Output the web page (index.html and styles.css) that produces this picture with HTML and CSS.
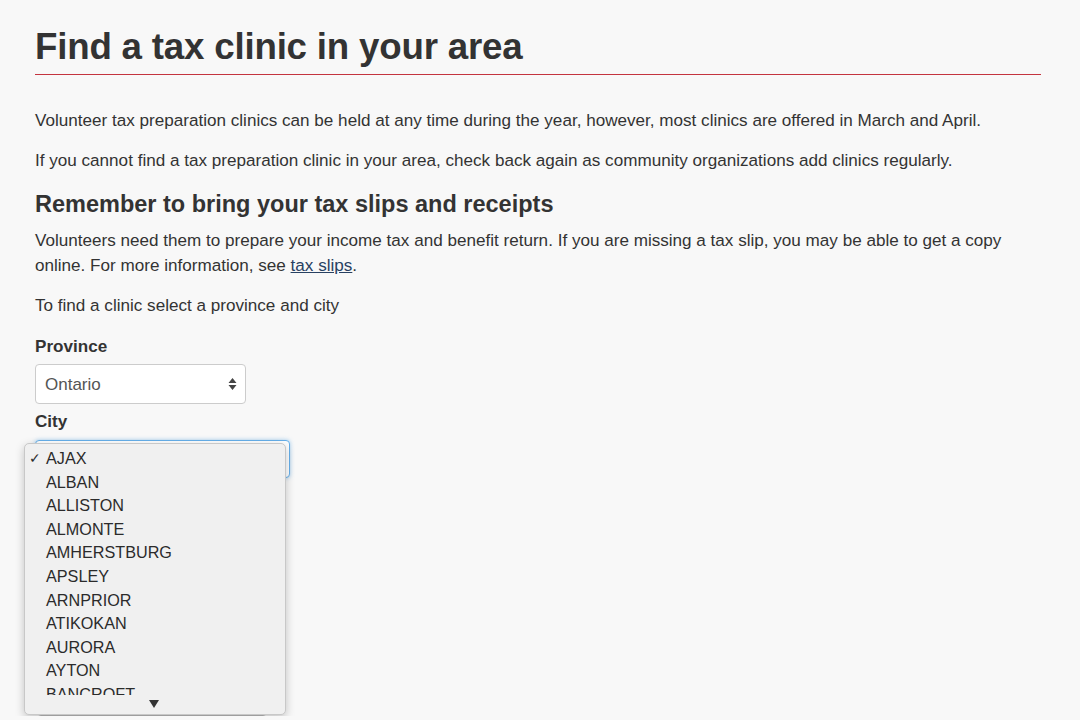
FILE: index.html
```html
<!DOCTYPE html>
<html lang="en">
<head>
    <meta charset="UTF-8">
    <meta name="viewport" content="width=device-width, initial-scale=1.0">
    <title>Find a tax clinic in your area</title>
    <link rel="stylesheet" href="styles.css">
</head>
<body>
    <main class="page">
        <h1>Find a tax clinic in your area</h1>

        <p>Volunteer tax preparation clinics can be held at any time during the year, however, most clinics are offered in March and April.</p>
        <p>If you cannot find a tax preparation clinic in your area, check back again as community organizations add clinics regularly.</p>

        <h2>Remember to bring your tax slips and receipts</h2>
        <p class="tight">Volunteers need them to prepare your income tax and benefit return. If you are missing a tax slip, you may be able to get a copy online. For more information, see <a href="#">tax slips</a>.</p>

        <p>To find a clinic select a province and city</p>

        <form class="finder">
            <label class="field-label" for="province">Province</label>
            <div class="select province-select" id="province">
                <span>Ontario</span>
                <span class="updown">
                    <svg width="9" height="14" viewBox="0 0 9 14"><path d="M4.5 1 L8.5 6 H0.5 Z M4.5 13 L8.5 8 H0.5 Z" fill="#444"/></svg>
                </span>
            </div>

            <label class="field-label" for="city">City</label>
            <div class="city-wrap">
                <div class="select city-select" id="city"><span>AJAX</span></div>

                <div class="popup">
                    <ul class="options">
                        <li class="checked">AJAX</li>
                        <li>ALBAN</li>
                        <li>ALLISTON</li>
                        <li>ALMONTE</li>
                        <li>AMHERSTBURG</li>
                        <li>APSLEY</li>
                        <li>ARNPRIOR</li>
                        <li>ATIKOKAN</li>
                        <li>AURORA</li>
                        <li>AYTON</li>
                        <li>BANCROFT</li>
                    </ul>
                    <div class="scroll-down">
                        <svg width="10" height="8" viewBox="0 0 10 8"><path d="M0 0 H10 L5 8 Z" fill="#333"/></svg>
                    </div>
                </div>
            </div>

            <button type="button" class="search-btn">Search</button>
        </form>
    </main>
</body>
</html>
```

FILE: styles.css
```css
body {
    margin: 0;
    background: #f8f8f8;
    color: #333;
    font-family: "Liberation Sans", Arial, sans-serif;
    font-size: 17.1px;
    line-height: 25px;
}

.page {
    padding: 0 39px 0 35px;
}

h1 {
    font-size: 36.7px;
    font-weight: bold;
    margin: 0;
    padding: 27px 0 8px;
    line-height: 39px;
    border-bottom: 1px solid #c4343f;
    letter-spacing: -0.2px;
}

p {
    margin: 0 0 15px;
}

.page h1 + p {
    margin-top: 33px;
}

h2 {
    font-size: 23.5px;
    font-weight: bold;
    margin: 17px 0 10px;
    line-height: 28px;
}

a {
    color: #284162;
}

.tight {
    margin-bottom: 15px;
}

.finder {
    display: flex;
    flex-direction: column;
    align-items: flex-start;
    margin-top: 19px;
}

.field-label {
    font-weight: bold;
    line-height: 20px;
}

.select {
    box-sizing: border-box;
    display: flex;
    align-items: center;
    justify-content: space-between;
    background: #fff;
    border: 1px solid #ccc;
    border-radius: 4px;
    padding: 0 8px 0 9px;
    font-size: 17px;
    color: #555;
}

.province-select {
    width: 211px;
    height: 40px;
    margin: 7px 0 8px;
}

.updown {
    display: flex;
}

.city-wrap {
    position: relative;
    margin-top: 8px;
}

.city-select {
    width: 255px;
    height: 38px;
    border-color: #66afe9;
    box-shadow: 0 0 4px rgba(102, 175, 233, 0.6);
}

.popup {
    position: absolute;
    left: -11px;
    top: 3px;
    width: 262px;
    height: 272px;
    box-sizing: border-box;
    background: #f0f0f0;
    border: 1px solid #c8c8c8;
    border-radius: 5px;
    box-shadow: 0 3px 10px rgba(0, 0, 0, 0.22);
    z-index: 2;
    color: #2b2b2b;
    font-size: 16.2px;
}

.options {
    list-style: none;
    margin: 0;
    padding: 3px 0 0;
    height: 248px;
    overflow: hidden;
}

.options li {
    line-height: 23.6px;
    padding-left: 21px;
    position: relative;
}

.options li.checked::before {
    content: "\2713";
    position: absolute;
    left: 4px;
    font-size: 14px;
}

.scroll-down {
    display: flex;
    justify-content: center;
    padding: 5px 3px 0 0;
}

.search-btn {
    margin: 198px 0 0 2px;
    width: 230px;
    height: 40px;
    background: #eaebed;
    border: 1px solid #bbb;
    border-radius: 4px;
    font-family: inherit;
    font-size: 16px;
    color: #335075;
}
```
